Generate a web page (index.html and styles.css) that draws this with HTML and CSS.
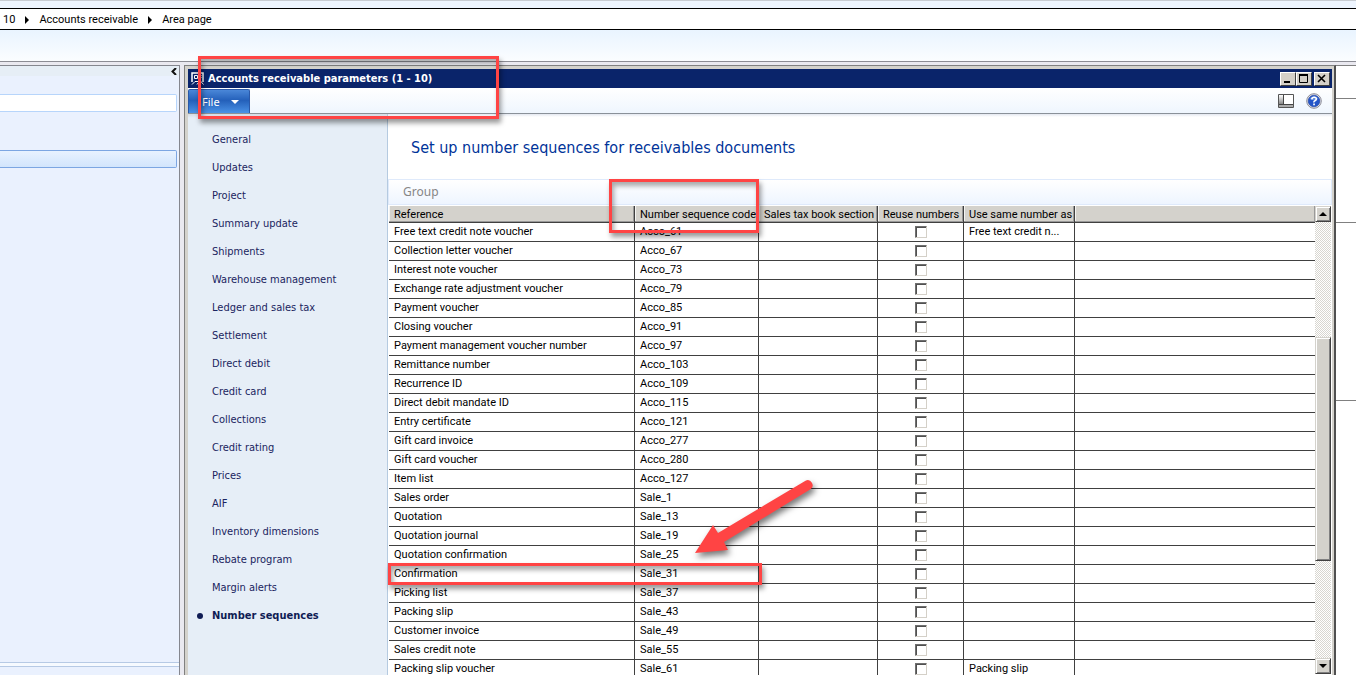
FILE: index.html
```html
<!DOCTYPE html>
<html lang="en">
<head>
<meta charset="utf-8">
<title>Accounts receivable parameters</title>
<link rel="stylesheet" href="styles.css">
</head>
<body>
<div class="app">
  <nav class="crumbs" aria-label="Breadcrumb">
    <a href="#">10</a><span class="crumb-arrow"></span><a href="#">Accounts receivable</a><span class="crumb-arrow"></span><a href="#">Area page</a>
  </nav>
  <div class="toolbar"></div>
  <div class="workspace">
    <aside class="pane">
      <div class="pane-head">
        <button class="collapse" aria-label="Collapse pane"><svg width="6" height="7" viewBox="0 0 6 7"><path d="M5 0L1.500 3.500L5 7" fill="none" stroke="#111" stroke-width="2"/></svg></button>
      </div>
      <input class="pane-search" type="text" aria-label="Search">
      <div class="pane-selected"></div>
      <div class="pane-split"></div>
      <div class="pane-foot"></div>
    </aside>
    <section class="window">
      <header class="titlebar">
        <svg class="app-icon" width="13" height="13" viewBox="0 0 13 13"><path d="M1 10V1h11v9" fill="none" stroke="#fff" stroke-width="1.500"/><path d="M3.500 3.500h3v3h-3z" fill="none" stroke="#fff"/><path d="M8 3.500h2.500M8 5.500h2.500M1 12.500l3-3M4 9.500h4M6 12.500l3-4 3.500 4" stroke="#fff" fill="none"/></svg>
        <h1>Accounts receivable parameters (1 - 10)</h1>
        <div class="win-buttons">
          <button aria-label="Minimize"><svg width="11" height="10" viewBox="0 0 11 10"><path d="M2 8h6" stroke="#000" stroke-width="2"/></svg></button>
          <button aria-label="Maximize"><svg width="11" height="10" viewBox="0 0 11 10"><path d="M1.500 1v7.500h8V1" fill="none" stroke="#000"/><path d="M1 1h9" stroke="#000" stroke-width="2"/></svg></button>
          <button aria-label="Close" class="close"><svg width="11" height="10" viewBox="0 0 11 10"><path d="M2 1l7 7M9 1L2 8" stroke="#000" stroke-width="1.600"/></svg></button>
        </div>
      </header>
      <div class="ribbon">
        <button class="file"><span>File</span><svg width="8" height="4" viewBox="0 0 8 4"><path d="M0 0h8L4 4z" fill="#fff"/></svg></button>
        <div class="ribbon-tools">
          <button aria-label="View details"><svg width="16" height="14" viewBox="0 0 16 14"><defs><linearGradient id="side" x1="0" y1="0" x2="0" y2="1"><stop offset="0" stop-color="#fff"/><stop offset="1" stop-color="#888"/></linearGradient></defs><path d="M.5.500h15v13H.500z" fill="#fff" stroke="#555"/><path d="M1 1h4v9H1z" fill="url(#side)"/><path d="M1 11h14v2H1z" fill="#aaa"/><path d="M5.500 1v9.500M1 10.500h14" stroke="#444"/></svg></button>
          <button aria-label="Help"><svg width="16" height="16" viewBox="0 0 16 16"><circle cx="8" cy="8" r="7.300" fill="#e4e4ea" stroke="#8d8d98"/><circle cx="8" cy="8" r="5.800" fill="#2455c8" stroke="#1b3fa0" stroke-width=".6"/><path d="M3.500 6a5 5 0 0 1 9 0Q8 8 3.500 6z" fill="#5f8be0"/><path d="M5.800 6.300Q6 4.300 8.200 4.300T10.300 6.100Q10.300 7.200 9 7.800T8 9.500" fill="none" stroke="#fff" stroke-width="1.600"/><path d="M7.200 10.500h1.700v1.700H7.200z" fill="#fff"/></svg></button>
        </div>
      </div>
      <div class="window-body">
        <nav class="side" aria-label="Parameters">
          <a href="#">General</a>
          <a href="#">Updates</a>
          <a href="#">Project</a>
          <a href="#">Summary update</a>
          <a href="#">Shipments</a>
          <a href="#">Warehouse management</a>
          <a href="#">Ledger and sales tax</a>
          <a href="#">Settlement</a>
          <a href="#">Direct debit</a>
          <a href="#">Credit card</a>
          <a href="#">Collections</a>
          <a href="#">Credit rating</a>
          <a href="#">Prices</a>
          <a href="#">AIF</a>
          <a href="#">Inventory dimensions</a>
          <a href="#">Rebate program</a>
          <a href="#">Margin alerts</a>
          <a href="#" class="active" aria-current="page">Number sequences</a>
        </nav>
        <main class="content">
          <h2>Set up number sequences for receivables documents</h2>
          <div class="group-bar"><button disabled>Group</button></div>
          <div class="grid">
            <div class="grid-view">
              <table>
                <colgroup><col class="c-ref"><col class="c-code"><col class="c-tax"><col class="c-reuse"><col class="c-same"><col></colgroup>
                <thead><tr><th>Reference</th><th>Number sequence code</th><th>Sales tax book section</th><th>Reuse numbers</th><th>Use same number as</th><th></th></tr></thead>
                <tbody id="rows"></tbody>
              </table>
            </div>
            <div class="scroll">
              <button aria-label="Scroll up"><svg width="8" height="4" viewBox="0 0 8 4"><path d="M0 4L4 0l4 4z"/></svg></button>
              <div class="track"><div class="space-above"></div><div class="thumb"></div><div class="space-below"></div></div>
              <button aria-label="Scroll down"><svg width="8" height="4" viewBox="0 0 8 4"><path d="M0 0h8L4 4z"/></svg></button>
            </div>
          </div>
        </main>
      </div>
    </section>
    <div class="backdrop"><div class="bd-a"></div><div class="bd-b"></div><div class="bd-c"></div></div>
  </div>
</div>
<div class="mark mark-title"></div>
<div class="mark mark-column"></div>
<div class="mark mark-row"></div>
<svg class="arrow" width="130" height="90" viewBox="0 0 130 90"><path d="M5 73L23 45L28 53L115.500 0.700A5 5 0 0 1 120.500 9.300L34 62L38 70Z" fill="#ff4444"/></svg>
<script src="grid.js"></script>
</body>
</html>
```

FILE: styles.css
```css
* { box-sizing: border-box; }
body {
  margin: 0;
  overflow: hidden;
  font: 11px/14px Roboto, "Liberation Sans", sans-serif;
  color: #000;
}
button { font: inherit; padding: 0; border: 0; background: none; }
a { color: inherit; text-decoration: none; }
svg { display: block; }

.app { display: flex; flex-direction: column; height: 100vh; }
.crumbs {
  display: flex;
  align-items: center;
  height: 30px;
  flex: none;
  padding: 9px 3px 1px;
  border-top: 1px solid #c8ccd2;
  background: linear-gradient(#000, #000) 0 7px / 100% 1px no-repeat,
    linear-gradient(#000, #000) 0 28px / 100% 1px no-repeat,
    linear-gradient(#eef5ff 7px, #fff 8px);
}
.crumb-arrow {
  margin: 0 10px;
  border: solid transparent;
  border-width: 4px 0 4px 4px;
  border-left-color: #000;
}
.toolbar {
  height: 32px;
  flex: none;
  background: linear-gradient(#e9f4ff, #fbfdff);
  border-bottom: 1px solid #8c8c94;
}
.workspace {
  display: flex;
  flex: 1;
  min-height: 0;
  padding-top: 3px;
  background: #eae9f0;
}

.pane {
  display: flex;
  flex-direction: column;
  width: 180px;
  border: solid #85878f;
  border-width: 1px 1px 0 0;
  background: #eaf1fe;
}
.pane-head { display: flex; justify-content: flex-end; height: 10px; padding: 2px; background: #e6eef6; }
.pane-search {
  height: 18px;
  margin: 18px 2px 0 0;
  border: 1px solid #b7d5fb;
  border-left: 0;
  border-radius: 0 2px 2px 0;
  background: #fff;
}
.pane-selected {
  height: 18px;
  margin: 38px 2px 0 0;
  border: 1px solid #7ca6e2;
  border-left: 0;
  border-radius: 0 2px 2px 0;
  background: linear-gradient(#e8f2ff, #d2e5fc);
}
.pane-split { height: 5px; margin-top: auto; border: solid #b7cae5; border-width: 1px 0; background: #f6faff; }
.pane-foot { height: 8px; }

.window {
  display: flex;
  flex-direction: column;
  flex: 1;
  min-width: 0;
  margin-left: 4px;
  padding: 3px 2px 0 3px;
  border: solid #808080;
  border-width: 1px 2px 0 1px;
  border-right-color: #505050;
  background: #d4d2cc;
}
.titlebar { display: flex; align-items: center; height: 19px; flex: none; padding: 0 2px 0 3px; background: #0a246a; color: #fff; }
.titlebar h1 { margin: 0 auto 0 4px; padding-top: 1px; font: bold 11px/18px "DejaVu Sans Condensed", "DejaVu Sans", sans-serif; }
.win-buttons { display: flex; }
.win-buttons button {
  width: 16px;
  height: 14px;
  padding: 1px;
  background: #d4d0c8;
  border: 1px solid;
  border-color: #fff #404040 #404040 #fff;
}
.win-buttons .close { margin-left: 2px; }
.ribbon {
  display: flex;
  justify-content: space-between;
  align-items: center;
  height: 26px;
  flex: none;
  padding-top: 1px;
  border-bottom: 1px solid #8a9199;
  background: linear-gradient(#fff, #eff6fe);
}
.file {
  display: flex;
  align-items: center;
  gap: 11px;
  align-self: stretch;
  width: 62px;
  padding-left: 13px;
  border: 1px solid #2a58a8;
  border-bottom: 0;
  border-radius: 2px 2px 0 0;
  background: linear-gradient(#4a87d8, #2460ba 45%, #4a92e6);
  color: #fff;
  font-family: "Noto Sans", sans-serif;
}
.ribbon-tools { display: flex; align-items: center; gap: 12px; padding-right: 10px; }
.window-body { display: flex; flex: 1; min-height: 0; background: #fff; }

.side {
  display: flex;
  flex-direction: column;
  flex: none;
  width: 200px;
  padding: 12px 0 0 24px;
  border-right: 1px solid #b5cae0;
  background: linear-gradient(#d5dbe4, #e6eef7 4px);
  color: #1a2460;
  font-family: "DejaVu Sans Condensed", "DejaVu Sans", sans-serif;
}
.side a { height: 28px; line-height: 28px; }
.side .active { display: flex; align-items: center; margin-left: -15px; color: #101c54; font-weight: bold; }
.active::before { content: ""; width: 6px; height: 6px; margin-right: 9px; border-radius: 50%; background: #101c54; }

.content { display: flex; flex-direction: column; flex: 1; min-width: 0; }
.content h2 {
  margin: 0;
  padding: 22px 23px 19px;
  background: linear-gradient(#e4e8f0, #fff 3px);
  color: #003399;
  font: 16px/24px "DejaVu Sans Condensed", "DejaVu Sans", sans-serif;
  white-space: nowrap;
}
.group-bar {
  height: 26px;
  flex: none;
  padding: 0 14px;
  border: 1px solid #dfeafb;
  background: linear-gradient(#fff, #eef5ff);
}
.group-bar button { height: 24px; color: #868686; font-family: "Noto Sans", sans-serif; font-size: 12px; }
.grid { display: flex; flex: 1; min-height: 0; padding: 1px 1px 0; }
.grid-view { flex: 1; min-width: 0; overflow: hidden; }
table { width: 100%; table-layout: fixed; border-spacing: 0; }
.c-ref { width: 246px; }
.c-code { width: 124px; }
.c-tax { width: 119px; }
.c-reuse { width: 86px; }
.c-same { width: 111px; }
th, td {
  padding: 0 0 0 5px;
  border: solid #404040;
  border-width: 0 1px 1px 0;
  font-weight: normal;
  text-align: left;
  white-space: nowrap;
  overflow: hidden;
}
th { height: 17px; padding-top: 2px; background: #d4d2cc; box-shadow: inset -1px -1px #999, inset 1px 0 #f4f4f2; }
td { height: 19px; }
th:last-child, td:last-child { border-right: 0; }
td:nth-child(4) { padding: 0; }
td input {
  display: block;
  appearance: none;
  width: 12px;
  height: 12px;
  margin: 0 auto;
  border: 1px solid;
  border-color: #707070 #d4d0c8 #d4d0c8 #707070;
  box-shadow: inset 1px 1px #505050;
  background: #fff;
}

.scroll { display: flex; flex-direction: column; flex: none; width: 16px; padding-bottom: 1px; }
.scroll button, .thumb {
  background: #d4d2cc;
  border: 1px solid;
  border-color: #d4d2cc #404040 #404040 #d4d2cc;
  box-shadow: inset 1px 1px #fff, inset -1px -1px #808080;
}
.scroll button { display: flex; align-items: center; justify-content: center; height: 16px; flex: none; }
.track {
  display: flex;
  flex-direction: column;
  flex: 1;
  background: repeating-conic-gradient(#d8d6d0 0 25%, #fff 0 50%) 0 0 / 2px 2px;
}
.space-above { flex: 116; }
.thumb { flex: 223; }
.space-below { flex: 97; }

.backdrop { display: flex; flex-direction: column; width: 20px; border-top: 1px solid #808080; background: #fff; }
.backdrop div { border-bottom: 1px solid #808080; }
.bd-a { height: 33px; }
.bd-b { height: 124px; }
.bd-c { height: 178px; }

.mark { position: absolute; border: 3px solid #ff4444; box-shadow: 2px 4px 5px #0006, inset 2px 4px 5px #0005; pointer-events: none; }
.mark-title { left: 198px; top: 56px; width: 301px; height: 63px; }
.mark-column { left: 609px; top: 179px; width: 150px; height: 54px; }
.mark-row { left: 388px; top: 563px; width: 374px; height: 22px; }
.arrow { position: absolute; left: 690px; top: 480px; overflow: visible; filter: drop-shadow(2px 4px 3px #0008); pointer-events: none; }
```

FILE: grid.js
```js
const rows = [
  ["Free text credit note voucher", "Acco_61", "Free text credit n..."],
  ["Collection letter voucher", "Acco_67"],
  ["Interest note voucher", "Acco_73"],
  ["Exchange rate adjustment voucher", "Acco_79"],
  ["Payment voucher", "Acco_85"],
  ["Closing voucher", "Acco_91"],
  ["Payment management voucher number", "Acco_97"],
  ["Remittance number", "Acco_103"],
  ["Recurrence ID", "Acco_109"],
  ["Direct debit mandate ID", "Acco_115"],
  ["Entry certificate", "Acco_121"],
  ["Gift card invoice", "Acco_277"],
  ["Gift card voucher", "Acco_280"],
  ["Item list", "Acco_127"],
  ["Sales order", "Sale_1"],
  ["Quotation", "Sale_13"],
  ["Quotation journal", "Sale_19"],
  ["Quotation confirmation", "Sale_25"],
  ["Confirmation", "Sale_31"],
  ["Picking list", "Sale_37"],
  ["Packing slip", "Sale_43"],
  ["Customer invoice", "Sale_49"],
  ["Sales credit note", "Sale_55"],
  ["Packing slip voucher", "Sale_61", "Packing slip"]
];
document.getElementById("rows").innerHTML = rows.map(([name, code, same = ""]) =>
  `<tr><td>${name}</td><td>${code}</td><td></td><td><input type="checkbox" aria-label="Reuse numbers: ${name}"></td><td>${same}</td><td></td></tr>`
).join("");
```
